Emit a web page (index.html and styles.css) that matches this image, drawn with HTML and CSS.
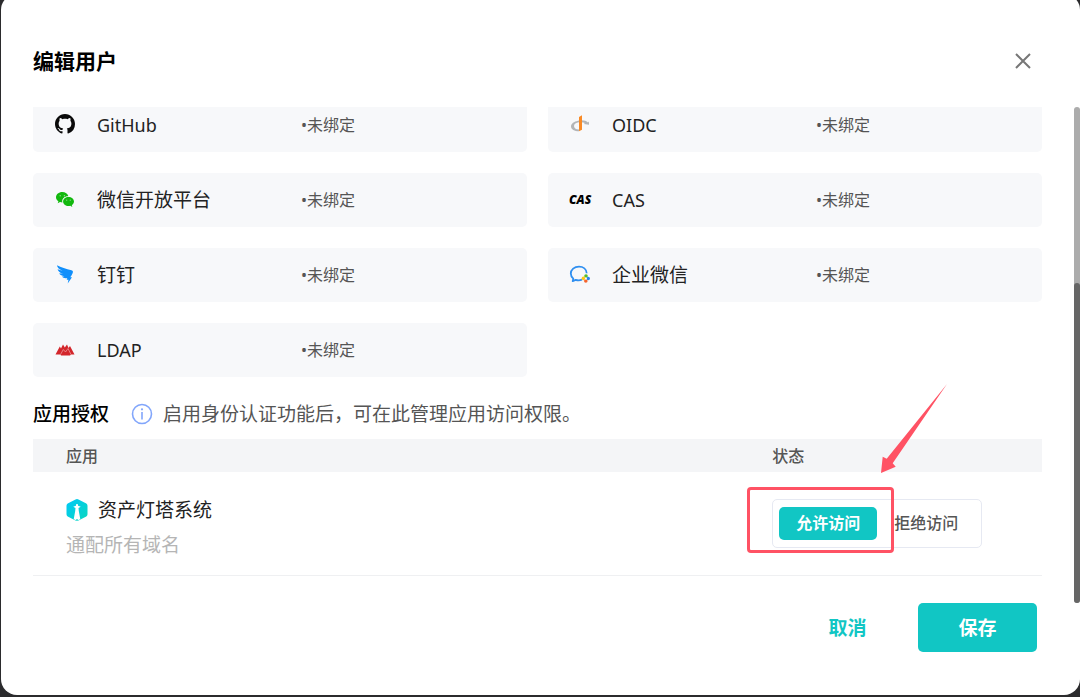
FILE: index.html
```html
<!DOCTYPE html>
<html lang="zh-CN">
<head>
    <meta charset="UTF-8">
    <meta name="viewport" content="width=device-width, initial-scale=1.0">
    <title>编辑用户</title>
    <link rel="stylesheet" href="styles.css">
</head>
<body>

    <div class="modal" role="dialog" aria-labelledby="modalTitle">
        <header class="modal-header">
            <h1 id="modalTitle">编辑用户</h1>
            <button type="button" class="close-btn" aria-label="关闭">
                <svg width="16" height="16" viewBox="0 0 16 16"><path d="M1 1l14 14M15 1L1 15" stroke="#777" stroke-width="2" fill="none"/></svg>
            </button>
        </header>

        <div class="modal-body">
            <div class="content">

                <!-- Third-party accounts -->
                <div class="accounts">
                    <div class="account">
                        <svg class="icon" viewBox="0 0 22 22"><path transform="translate(1 0) scale(1.25)" fill="#0a0a0a" d="M8 0C3.58 0 0 3.58 0 8c0 3.54 2.29 6.53 5.47 7.59.4.07.55-.17.55-.38 0-.19-.01-.82-.01-1.49-2.01.37-2.53-.49-2.69-.94-.09-.23-.48-.94-.82-1.13-.28-.15-.68-.52-.01-.53.63-.01 1.08.58 1.23.82.72 1.21 1.87.87 2.33.66.07-.52.28-.87.51-1.07-1.78-.2-3.64-.89-3.64-3.95 0-.87.31-1.59.82-2.15-.08-.2-.36-1.02.08-2.12 0 0 .67-.21 2.2.82.64-.18 1.32-.27 2-.27s1.36.09 2 .27c1.53-1.04 2.2-.82 2.2-.82.44 1.1.16 1.92.08 2.12.51.56.82 1.27.82 2.15 0 3.07-1.87 3.75-3.65 3.95.29.25.54.73.54 1.48 0 1.07-.01 1.93-.01 2.2 0 .21.15.46.55.38A8.01 8.01 0 0 0 16 8c0-4.42-3.58-8-8-8z"/></svg>
                        <span class="name latin">GitHub</span>
                        <span class="status">•未绑定</span>
                    </div>
                    <div class="account">
                        <svg class="icon" viewBox="0 0 22 22">
                            <path d="M19 8.500C17 6.500 13 5.700 9 6.700C5 7.600 2 9.500 2 12.500C2 15.500 5.500 17.300 10 17.300V15.500C6.500 15.300 5 14 5 12C5 10 7 8.800 10 8.300C12.500 7.900 14.500 8.300 16 9.100L14.800 10L20 10.800V7.600Z" fill="#b3b5b7"/>
                            <path d="M10 3l3-1.800v14.600l-3 1.500z" fill="#f98a25"/>
                        </svg>
                        <span class="name latin">OIDC</span>
                        <span class="status">•未绑定</span>
                    </div>
                    <div class="account">
                        <svg class="icon" viewBox="0 0 22 22">
                            <path d="M8.300 3C4.800 3 2 5.300 2 8.200c0 1.700.9 3.100 2.400 4.100l-.7 2 2.300-1.200c.8.200 1.500.3 2.400.3-.1-.4-.2-.8-.2-1.200 0-2.700 2.500-4.900 5.700-4.900h.5C13.800 4.700 11.300 3 8.300 3z" fill="#12b80e"/>
                            <path d="M14.500 7.900c-3 0-5.400 2-5.400 4.600s2.400 4.600 5.400 4.600c.6 0 1.200-.1 1.800-.3l2 1.200-.5-1.900c1.300-.8 2.200-2.100 2.200-3.600 0-2.600-2.500-4.600-5.500-4.600z" fill="#12b80e"/>
                            <g fill="#8cdc8a"><circle cx="6.200" cy="6.800" r=".7"/><circle cx="10.400" cy="6.800" r=".7"/><circle cx="12.700" cy="11.200" r=".6"/><circle cx="16.300" cy="11.200" r=".6"/></g>
                        </svg>
                        <span class="name">微信开放平台</span>
                        <span class="status">•未绑定</span>
                    </div>
                    <div class="account">
                        <span class="icon cas-logo">CAS</span>
                        <span class="name latin">CAS</span>
                        <span class="status">•未绑定</span>
                    </div>
                    <div class="account">
                        <svg class="icon" viewBox="0 0 22 22"><path d="M3 1.200C7 3.600 12 4.500 17.500 6.300C19.200 6.900 19.200 7.800 18.700 9C18.100 10.700 17.200 12 16.300 13.300H18L13.700 19.600L14.500 15.700H12.700L13.300 14C11 14.600 8.900 13.800 8 12.600L10.500 12.300C7.700 11.900 6.100 11 5.200 9.300L9.200 9.800C5.500 8.600 4 7 3.600 5.200L8.500 6.800C4.700 5 3.200 3.500 3 1.200Z" fill="#108ffb"/></svg>
                        <span class="name">钉钉</span>
                        <span class="status">•未绑定</span>
                    </div>
                    <div class="account">
                        <svg class="icon" viewBox="0 0 22 22">
                            <path d="M17.700 9.300C17.500 5.300 14.200 2.700 10 2.700C5.300 2.700 1.800 5.600 1.800 9.600C1.800 11.700 2.800 13.300 4.300 14.600L3.700 17.100L6.700 15.800C8.700 16.500 11 16.400 13 15.700" fill="none" stroke="#2f8ff0" stroke-width="1.800" stroke-linejoin="round"/>
                            <circle cx="17" cy="12" r="1.800" fill="#59bd27"/><circle cx="19.200" cy="14.500" r="1.800" fill="#2687ed"/><circle cx="16.800" cy="17" r="1.800" fill="#f5642d"/><circle cx="14.400" cy="14.400" r="1.800" fill="#fac619"/><circle cx="16.900" cy="14.500" r="1" fill="#f7f8fa"/>
                        </svg>
                        <span class="name">企业微信</span>
                        <span class="status">•未绑定</span>
                    </div>
                    <div class="account">
                        <svg class="icon" viewBox="0 0 22 22">
                            <path d="M1.500 15.500L5.800 7.500L7 9.500L9 5.500L10.800 8.500L13 5.500L14.500 9L16 7L20.500 15.500H17L16 16.500H7L6.500 15.500Z" fill="#d3262b"/>
                            <path d="M6.500 15.500L9.300 10.500L11.500 13L14 9.500L17 15.500" fill="none" stroke="#f2b9bb" stroke-width=".6"/>
                        </svg>
                        <span class="name latin">LDAP</span>
                        <span class="status">•未绑定</span>
                    </div>
                </div>

                <!-- Application authorization -->
                <div class="section-title">
                    <h2>应用授权</h2>
                    <svg class="info-icon" viewBox="0 0 22 22"><circle cx="11" cy="11" r="9.500" fill="none" stroke="#82a6fb" stroke-width="1.600"/><path d="M11 9v7.500" stroke="#82a6fb" stroke-width="1.600"/><circle cx="11" cy="6.300" r="1.100" fill="#82a6fb"/></svg>
                    <p>启用身份认证功能后，可在此管理应用访问权限。</p>
                </div>

                <table class="app-table">
                    <thead>
                        <tr>
                            <th class="col-app">应用</th>
                            <th>状态</th>
                        </tr>
                    </thead>
                    <tbody>
                        <tr>
                            <td class="app-cell">
                                <div class="app-name">
                                    <svg class="app-icon" viewBox="0 0 22 22">
                                        <defs><linearGradient id="beacon" x1="0" y1="0" x2="1" y2="1"><stop offset="0" stop-color="#00c8f8"/><stop offset="1" stop-color="#0bd8bd"/></linearGradient></defs>
                                        <path d="M9.500.5Q11-.3 12.500.5L20.300 4.600Q21.500 5.300 21.500 6.800V15.200Q21.500 16.700 20.300 17.400L12.500 21.500Q11 22.300 9.500 21.500L1.700 17.400Q.5 16.700.5 15.200V6.800Q.5 5.300 1.700 4.600Z" fill="url(#beacon)"/>
                                        <path d="M10.300 5h1.400l.4 1.800 2.700.9-2.300 1.200.3 3 1.500 8.400-3.300 1.200-3.300-1.200 1.500-8.400.3-3-2.300-1.200 2.700-.9z" fill="#fff"/>
                                        <circle cx="11" cy="20.700" r=".8" fill="#0cd5cc"/>
                                    </svg>
                                    <span>资产灯塔系统</span>
                                </div>
                                <div class="app-domain">通配所有域名</div>
                            </td>
                            <td>
                                <div class="segment" role="group" aria-label="状态">
                                    <button type="button" class="active" aria-pressed="true">允许访问</button>
                                    <button type="button" aria-pressed="false">拒绝访问</button>
                                    <span class="highlight"></span>
                                    <svg class="arrow" viewBox="0 0 68 90" width="68" height="90"><path d="M67 1L12.700 80.300L15.700 83.700L1 90L2.700 73.700L6.700 75.700Z" fill="#ff5264"/></svg>
                                </div>
                            </td>
                        </tr>
                    </tbody>
                </table>
            </div>
            <div class="scrollbar"><div class="thumb"></div></div>
        </div>

        <footer class="modal-footer">
            <button type="button" class="btn">取消</button>
            <button type="button" class="btn btn-primary">保存</button>
        </footer>
    </div>

</body>
</html>
```

FILE: styles.css
```css
* {
    box-sizing: border-box;
}

body {
    display: flow-root;
    margin: 0;
    font-family: "Noto Sans", "Noto Sans CJK SC", sans-serif;
    font-size: 19px;
    color: #222;
    background-color: #2b2b2d;
    overflow: hidden;
}

h1, h2, p {
    margin: 0;
}

button {
    font-family: inherit;
    border: none;
    padding: 0;
    background: none;
    cursor: pointer;
}

.modal {
    margin: -6px 0 2px 1px;
    padding-bottom: 43px;
    background: #fff;
    border-radius: 16px;
}

.modal-header {
    display: flex;
    justify-content: space-between;
    align-items: center;
    padding: 51px 41px 30px 32px;
}

.modal-header h1 {
    font-size: 21px;
    line-height: 32px;
    font-weight: 700;
    color: #000;
}

.close-btn {
    display: flex;
    align-items: center;
    justify-content: center;
    width: 32px;
    height: 32px;
}

.modal-body {
    display: flex;
    overflow: hidden;
}

.content {
    flex: 1;
    padding: 0 32px 27px;
}

/* scrolled a little, so the first row is cut off at the top */
.accounts {
    display: grid;
    grid-template-columns: 1fr 1fr;
    gap: 21px;
    margin-top: -9px;
}

.account {
    display: grid;
    grid-template-columns: 22px 204px 1fr;
    align-items: center;
    height: 54px;
    padding-left: 21px;
    background: #f7f8fa;
    border-radius: 5px;
}

.icon {
    width: 22px;
    height: 22px;
}

.cas-logo {
    font-family: "Open Sans", sans-serif;
    font-size: 12px;
    line-height: 22px;
    font-weight: 800;
    font-style: italic;
    color: #000;
}

.name {
    padding-left: 21px;
    line-height: 28px;
}

.latin {
    font-size: 18px;
}

.status {
    padding-left: 21px;
    font-size: 16px;
    line-height: 24px;
    color: #555;
}

.section-title {
    display: flex;
    align-items: center;
    padding: 24px 0 12px;
    line-height: 26px;
}

.section-title h2 {
    font-size: 19px;
    font-weight: 500;
    color: #000;
}

.section-title p {
    color: #555;
}

.info-icon {
    width: 22px;
    height: 22px;
    margin: 0 10px 0 22px;
}

.app-table {
    width: 100%;
    table-layout: fixed;
    border-collapse: collapse;
}

.app-table th {
    height: 33px;
    padding: 0 33px;
    font-size: 16px;
    line-height: 24px;
    font-weight: 500;
    text-align: left;
    color: #555;
    background: #f4f5f7;
}

.app-table .col-app {
    width: 70%;
}

.app-table td {
    height: 103px;
    padding: 0 33px;
    border-bottom: 1px solid #eff0f2;
}

.app-table .app-cell {
    padding-top: 9px;
}

.app-name {
    display: flex;
    align-items: center;
    gap: 10px;
    line-height: 35px;
}

.app-icon {
    width: 22px;
    height: 22px;
}

.app-domain {
    line-height: 35px;
    color: #b5b5b5;
}

.segment {
    position: relative;
    display: inline-flex;
    align-items: center;
    height: 49px;
    padding: 0 6px;
    border: 1px solid #e6e9f2;
    border-radius: 5px;
    vertical-align: middle;
}

.segment button {
    width: 98px;
    height: 33px;
    font-size: 16px;
    line-height: 24px;
    font-weight: 500;
    color: #555;
    border-radius: 5px;
}

.segment .active {
    font-weight: 700;
    color: #fff;
    background: #11c6c4;
}

/* callout drawn over the switch */
.highlight {
    position: absolute;
    top: -13px;
    left: -26px;
    width: 147px;
    height: 66px;
    border: 3px solid #ff5264;
    border-radius: 4px;
}

.arrow {
    position: absolute;
    top: -117px;
    left: 107px;
}

.scrollbar {
    width: 6px;
    padding-top: 176px;
    background: #acacac;
    border-radius: 3px;
}

.scrollbar .thumb {
    height: 100%;
    background: #666;
    border-radius: 3px;
}

.modal-footer {
    display: flex;
    justify-content: flex-end;
    gap: 11px;
    padding-right: 43px;
}

.btn {
    width: 119px;
    height: 49px;
    font-size: 19px;
    font-weight: 700;
    color: #11c6c4;
    border-radius: 5px;
}

.btn-primary {
    color: #fff;
    background: #11c6c4;
}
```
